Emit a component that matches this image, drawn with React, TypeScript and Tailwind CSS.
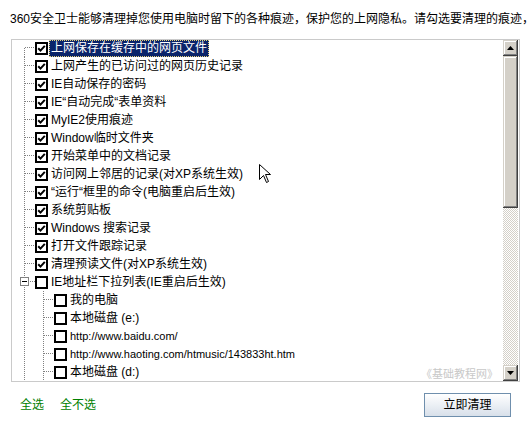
import React from "react";

type Item = { label: string; checked: boolean; selected?: boolean };

const top: Item[] = [
  { label: "上网保存在缓存中的网页文件", checked: true, selected: true },
  { label: "上网产生的已访问过的网页历史记录", checked: true },
  { label: "IE自动保存的密码", checked: true },
  { label: "IE“自动完成“表单资料", checked: true },
  { label: "MyIE2使用痕迹", checked: true },
  { label: "Window临时文件夹", checked: true },
  { label: "开始菜单中的文档记录", checked: true },
  { label: "访问网上邻居的记录(对XP系统生效)", checked: true },
  { label: "“运行“框里的命令(电脑重启后生效)", checked: true },
  { label: "系统剪贴板", checked: true },
  { label: "Windows 搜索记录", checked: true },
  { label: "打开文件跟踪记录", checked: true },
  { label: "清理预读文件(对XP系统生效)", checked: true },
];

const children: { text: string; small?: boolean }[] = [
  { text: "我的电脑" },
  { text: "本地磁盘 (e:)" },
  { text: "http://www.baidu.com/", small: true },
  { text: "http://www.haoting.com/htmusic/143833ht.htm", small: true },
  { text: "本地磁盘 (d:)" },
];

function Box({ checked }: { checked: boolean }) {
  return (
    <span className="w-[13px] h-[13px] border-2 border-black bg-white flex items-center justify-center shrink-0">
      {checked && (
        <svg width="9" height="9" viewBox="0 0 9 9">
          <path d="M1.2 4.2 L3.5 6.6 L7.8 1.8" stroke="#000" strokeWidth="2" fill="none" />
        </svg>
      )}
    </span>
  );
}

const dot = { stroke: "#808080", strokeWidth: 1, strokeDasharray: "1 1", shapeRendering: "crispEdges" as const };

function Gutter0({ first, expander }: { first?: boolean; expander?: boolean }) {
  return (
    <svg width="23" height="18" className="shrink-0">
      {expander ? (
        <>
          <line x1="12.5" y1="0" x2="12.5" y2="4" {...dot} />
          <line x1="12.5" y1="14" x2="12.5" y2="18" {...dot} />
          <line x1="18" y1="8.5" x2="23" y2="8.5" {...dot} />
          <rect x="8.5" y="4.5" width="8" height="8" fill="#fff" stroke="#808080" shapeRendering="crispEdges" />
          <line x1="10" y1="8.5" x2="15" y2="8.5" stroke="#000" shapeRendering="crispEdges" />
        </>
      ) : (
        <>
          <line x1="12.5" y1={first ? 9 : 0} x2="12.5" y2="18" {...dot} />
          <line x1="13" y1="8.5" x2="23" y2="8.5" {...dot} />
        </>
      )}
    </svg>
  );
}

function Gutter1() {
  return (
    <svg width="42" height="18" className="shrink-0">
      <line x1="12.5" y1="0" x2="12.5" y2="18" {...dot} />
      <line x1="31.5" y1="0" x2="31.5" y2="18" {...dot} />
      <line x1="32" y1="8.5" x2="42" y2="8.5" {...dot} />
    </svg>
  );
}

function Label({ text, selected, small }: { text: string; selected?: boolean; small?: boolean }) {
  return (
    <span
      className={
        "ml-[1px] px-[2px] h-[17px] leading-[17px] whitespace-nowrap " +
        (small ? "text-[11px] " : "text-[12px] ") +
        (selected ? "bg-[#0a246a] text-white outline-1 outline-dotted outline-[#e8d27a] -outline-offset-1" : "text-black")
      }
    >
      {text}
    </span>
  );
}

function ScrollBtn({ up }: { up?: boolean }) {
  return (
    <div className="h-[16px] bg-[#d4d0c8] shadow-[inset_-1px_-1px_#404040,inset_1px_1px_#d4d0c8,inset_-2px_-2px_#808080,inset_2px_2px_#ffffff] flex items-center justify-center">
      <svg width="7" height="4" viewBox="0 0 7 4">
        {up ? <polygon points="0,4 7,4 3.5,0" fill="#000" /> : <polygon points="0,0 7,0 3.5,4" fill="#000" />}
      </svg>
    </div>
  );
}

export default function App() {
  return (
    <div
      className="relative w-[531px] h-[424px] bg-white overflow-hidden text-[12px] text-black"
      style={{ fontFamily: '"Liberation Sans", "Noto Sans CJK SC", sans-serif' }}
    >
      <div className="pt-[12px] pl-[10px] leading-[14px] whitespace-nowrap">
        360安全卫士能够清理掉您使用电脑时留下的各种痕迹，保护您的上网隐私。请勾选要清理的痕迹，
      </div>

      <div className="relative mt-[13px] ml-[11px] w-[509px] h-[343px] border border-[#cacaca] flex">
        <div className="flex-1 overflow-hidden">
          <div className="-mt-px">
            {top.map((it, i) => (
              <div key={i} className="flex items-center h-[18px]">
                <Gutter0 first={i === 0} />
                <Box checked={it.checked} />
                <Label text={it.label} selected={it.selected} />
              </div>
            ))}
            <div className="flex items-center h-[18px]">
              <Gutter0 expander />
              <Box checked={false} />
              <Label text="IE地址栏下拉列表(IE重启后生效)" />
            </div>
            {children.map((c, i) => (
              <div key={i} className="flex items-center h-[18px]">
                <Gutter1 />
                <Box checked={false} />
                <Label text={c.text} small={c.small} />
              </div>
            ))}
          </div>
        </div>
        <div className="w-[15px] mr-[1px] flex flex-col">
          <ScrollBtn up />
          <div className="h-[152px] bg-[#d4d0c8] shadow-[inset_-1px_-1px_#404040,inset_1px_1px_#d4d0c8,inset_-2px_-2px_#808080,inset_2px_2px_#ffffff]" />
          <div className="flex-1 bg-[image:repeating-conic-gradient(#d4d0c8_0_25%,#ffffff_0_50%)] bg-[length:2px_2px]" />
          <ScrollBtn />
        </div>
        <div className="absolute right-[21px] top-[327px] text-[11px] leading-[14px] text-[#c8c8c8] whitespace-nowrap">
          《基础教程网》
        </div>
      </div>

      <div className="flex items-center justify-between mt-[11px] pl-[20px] pr-[20px]">
        <div className="flex gap-[16px] text-[#008000] leading-[14px]">
          <span>全选</span>
          <span>全不选</span>
        </div>
        <button className="w-[87px] h-[24px] border border-[#6f8fad] bg-gradient-to-b from-white to-[#d8e0ea] text-[12px] text-black leading-[14px]">
          立即清理
        </button>
      </div>

      <svg className="absolute left-[259px] top-[164px]" width="13" height="20" viewBox="0 0 13 20">
        <path d="M0.5 0.5 L0.5 15.5 L4.5 11.5 L7.5 18.5 L9.5 17.5 L6.5 10.5 L11.5 10.5 Z" fill="#fff" stroke="#000" strokeWidth="1" />
      </svg>
    </div>
  );
}
